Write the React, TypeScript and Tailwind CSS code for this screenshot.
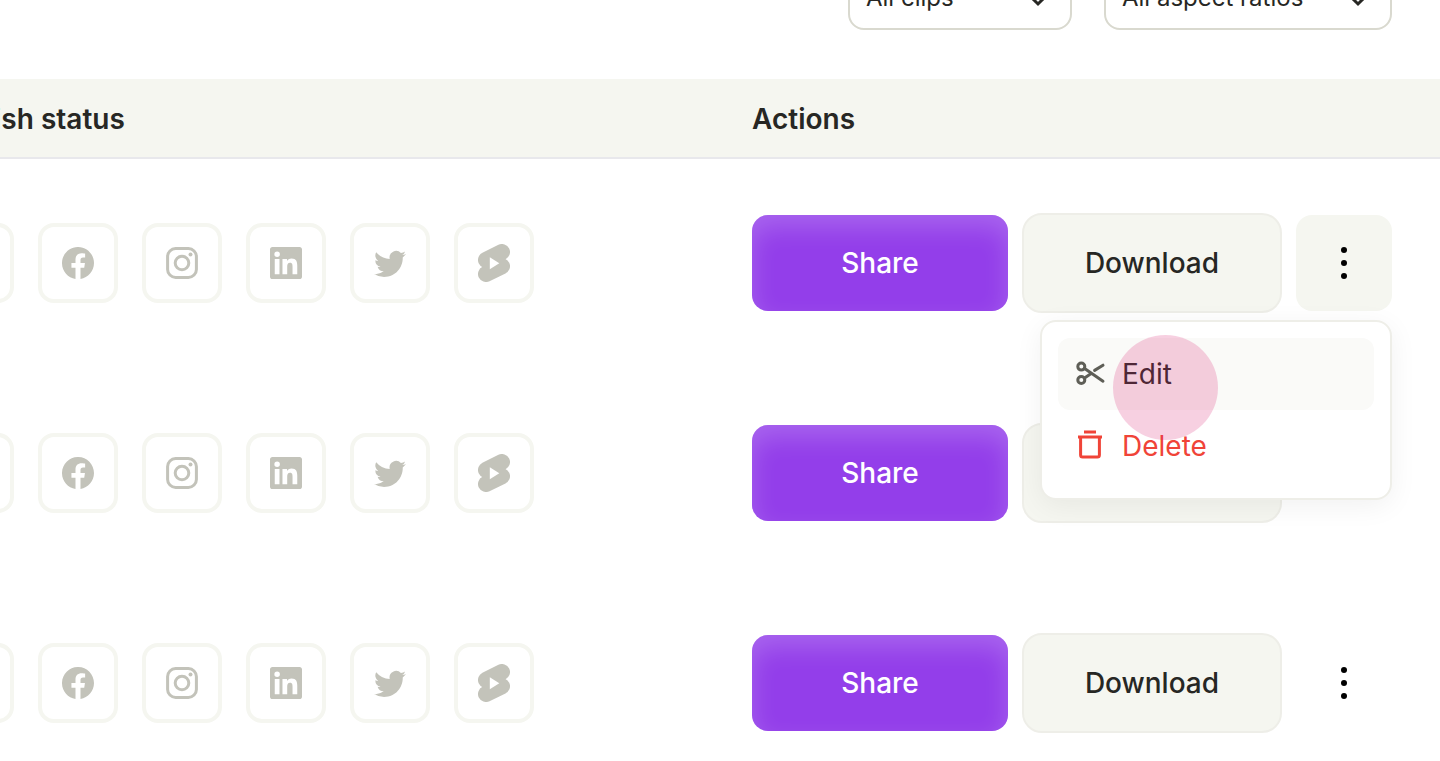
import { useState } from "react";
import type { ComponentType } from "react";
import { BsFacebook, BsTwitter } from "react-icons/bs";
import { SiTiktok } from "react-icons/si";

type IconProps = { className?: string };

type Platform = {
  name: string;
  Icon: ComponentType<IconProps>;
  size: string;
};

function InstagramIcon({ className }: IconProps) {
  return (
    <svg viewBox="0 0 32 32" fill="none" stroke="currentColor" className={className}>
      <rect x="1.6" y="1.6" width="28.8" height="28.8" rx="8" strokeWidth="3" />
      <circle cx="16" cy="16" r="6.8" strokeWidth="3" />
      <circle cx="24.5" cy="7.5" r="2" fill="currentColor" stroke="none" />
    </svg>
  );
}

function LinkedInIcon({ className }: IconProps) {
  return (
    <svg viewBox="0 0 24 24" fill="currentColor" className={className}>
      <path d="M20.447 20.452h-3.554v-5.569c0-1.328-.027-3.037-1.852-3.037-1.853 0-2.136 1.445-2.136 2.939v5.667H9.351V9h3.414v1.561h.046c.477-.9 1.637-1.85 3.37-1.85 3.601 0 4.267 2.37 4.267 5.455v6.286zM5.337 7.433a2.062 2.062 0 0 1-2.063-2.065 2.064 2.064 0 1 1 2.063 2.065zm1.782 13.019H3.555V9h3.564v11.452zM22.225 0H1.771C.792 0 0 .774 0 1.729v20.542C0 23.227.792 24 1.771 24h20.451C23.2 24 24 23.227 24 22.271V1.729C24 .774 23.2 0 22.222 0h.003z" />
    </svg>
  );
}

function ShortsIcon({ className }: IconProps) {
  return (
    <svg viewBox="0 0 32 38" className={className}>
      <path d="M8 16 24 8M24 22.2 8 30M8 16l16 6.2" fill="none" stroke="currentColor" strokeWidth="16" strokeLinecap="round" />
      <path d="M11.8 13.2v12l9.5-6z" fill="#fff" />
    </svg>
  );
}

function ScissorsIcon({ className }: IconProps) {
  return (
    <svg viewBox="0 0 32 32" fill="none" stroke="currentColor" strokeWidth="3" strokeLinecap="round" className={className}>
      <circle cx="7.3" cy="8.6" r="3.5" />
      <circle cx="7.3" cy="22" r="3.5" />
      <path d="M10.6 10.6 29 23.2M10.6 20l5.8-4M20.6 12.4 29 7.2" />
    </svg>
  );
}

function TrashIcon({ className }: IconProps) {
  return (
    <svg viewBox="0 0 32 32" fill="none" stroke="currentColor" strokeWidth="3" className={className}>
      <path d="M10 2h12M4 7h24" />
      <path d="M6.6 7v18a2 2 0 0 0 2 2h14.8a2 2 0 0 0 2-2V7" />
    </svg>
  );
}

function ChevronIcon({ className }: IconProps) {
  return (
    <svg viewBox="0 0 24 24" fill="none" stroke="currentColor" strokeWidth="3" className={className}>
      <path d="m5 9 7 7 7-7" />
    </svg>
  );
}

const platforms: Platform[] = [
  { name: "TikTok", Icon: SiTiktok, size: "size-8" },
  { name: "Facebook", Icon: BsFacebook, size: "size-8" },
  { name: "Instagram", Icon: InstagramIcon, size: "size-8" },
  { name: "LinkedIn", Icon: LinkedInIcon, size: "size-8" },
  { name: "Twitter", Icon: BsTwitter, size: "size-8" },
  { name: "YouTube Shorts", Icon: ShortsIcon, size: "h-[38px] w-8" },
];

const clips = [1, 2, 3];

type FilterProps = {
  label: string;
  option: string;
  width: string;
};

function Filter({ label, option, width }: FilterProps) {
  return (
    <div className={`relative ${width}`}>
      <select
        aria-label={label}
        className="h-16 w-full appearance-none rounded-2xl border-2 border-[#d9d9cf] bg-white px-4 text-[24px] text-[#272724]"
      >
        <option>{option}</option>
      </select>
      <ChevronIcon className="pointer-events-none absolute top-[22px] right-[22px] size-6 text-[#272724]" />
    </div>
  );
}

function ClipMenu() {
  return (
    <div
      role="menu"
      className="absolute top-[105px] right-0 z-10 w-[352px] rounded-2xl border-2 border-[#eeeee8] bg-white p-4 font-normal shadow-[0_6px_28px_rgba(0,0,0,0.06)]"
    >
      <button
        role="menuitem"
        className="flex h-[72px] w-full items-center gap-4 rounded-xl bg-[#fafaf8] px-4 text-[28px] text-[#272724]"
      >
        <ScissorsIcon className="size-8 text-[#5e5e57]" />
        Edit
      </button>
      <button
        role="menuitem"
        className="flex h-[72px] w-full items-center gap-4 rounded-xl px-4 text-[28px] text-[#f04438]"
      >
        <TrashIcon className="size-8" />
        Delete
      </button>
      <span className="pointer-events-none absolute top-[13px] left-[71px] size-[105px] rounded-full bg-[#db2777]/22" />
    </div>
  );
}

type ClipRowProps = {
  open: boolean;
  onToggle: () => void;
};

function ClipRow({ open, onToggle }: ClipRowProps) {
  return (
    <tr className="h-[210px] align-top">
      <td className="pt-16">
        <div className="flex gap-6">
          {platforms.map(({ name, Icon, size }) => (
            <button
              key={name}
              aria-label={name}
              className="flex size-20 items-center justify-center rounded-2xl border-4 border-[#f5f6f0] text-[#c3c3ba]"
            >
              <Icon className={size} />
            </button>
          ))}
        </div>
      </td>
      <td className="w-[688px] pt-[54px] pr-12">
        <div className="flex items-center gap-[14px] text-[28px] font-medium">
          <button className="h-24 w-64 rounded-2xl bg-[#933eea] text-white shadow-[inset_0_12px_26px_rgba(255,255,255,0.2)]">
            Share
          </button>
          <button className="h-[100px] flex-1 rounded-[20px] border-2 border-[#eeeee8] bg-[#f5f6f0] text-[#272724]">
            Download
          </button>
          <div className="relative">
            <button
              aria-label="More actions"
              aria-expanded={open}
              onClick={onToggle}
              className={`flex size-24 flex-col items-center justify-center gap-[7px] rounded-2xl ${open ? "bg-[#f5f6f0]" : ""}`}
            >
              <span className="size-[6px] rounded-full bg-black" />
              <span className="size-[6px] rounded-full bg-black" />
              <span className="size-[6px] rounded-full bg-black" />
            </button>
            {open && <ClipMenu />}
          </div>
        </div>
      </td>
    </tr>
  );
}

export default function App() {
  const [openClip, setOpenClip] = useState<number | null>(1);

  return (
    <main className="h-screen overflow-hidden bg-white font-['Inter',sans-serif] text-[#272724]">
      <div className="flex h-[79px] items-end justify-end gap-8 overflow-hidden px-12 pb-[49px]">
        <Filter label="Clips" option="All clips" width="w-56" />
        <Filter label="Aspect ratio" option="All aspect ratios" width="w-72" />
      </div>

      <table className="-ml-[66px] w-[calc(100%+66px)] border-separate border-spacing-0">
        <thead>
          <tr className="h-20 bg-[#f5f6f0] text-left text-[28px]">
            <th className="border-b-2 border-[#e8e8ec] p-0 pt-0.5 font-semibold">Publish status</th>
            <th className="border-b-2 border-[#e8e8ec] p-0 pt-0.5 font-semibold">Actions</th>
          </tr>
        </thead>
        <tbody>
          {clips.map((clip) => (
            <ClipRow
              key={clip}
              open={openClip === clip}
              onToggle={() => setOpenClip(openClip === clip ? null : clip)}
            />
          ))}
        </tbody>
      </table>
    </main>
  );
}
